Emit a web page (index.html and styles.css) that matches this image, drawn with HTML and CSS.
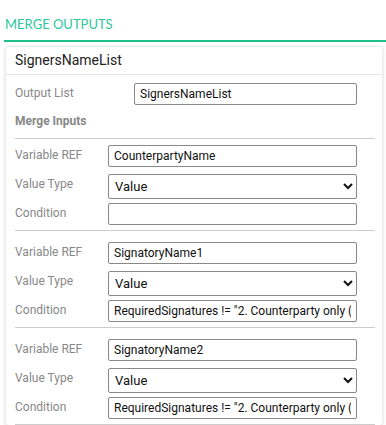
FILE: index.html
```html
<!DOCTYPE html>
<html lang="en">
<head>
    <meta charset="UTF-8">
    <title>Merge Outputs</title>
    <link rel="stylesheet" href="styles.css">
</head>
<body>
    <div class="panel">
        <h2 class="panel-title">MERGE OUTPUTS</h2>

        <div class="card">
            <div class="card-header">SignersNameList</div>
            <div class="card-body">
                <div class="row row-output">
                    <label>Output List</label>
                    <input type="text" value="SignersNameList">
                </div>
                <div class="sub-title">Merge Inputs</div>

                <!-- Input 1 -->
                <div class="group first">
                    <div class="row">
                        <label>Variable REF</label>
                        <input type="text" value="CounterpartyName">
                    </div>
                    <div class="row">
                        <label>Value Type</label>
                        <select><option>Value</option></select>
                    </div>
                    <div class="row">
                        <label>Condition</label>
                        <input type="text" value="">
                    </div>
                </div>

                <!-- Input 2 -->
                <div class="group">
                    <div class="row">
                        <label>Variable REF</label>
                        <input type="text" value="SignatoryName1">
                    </div>
                    <div class="row">
                        <label>Value Type</label>
                        <select><option>Value</option></select>
                    </div>
                    <div class="row">
                        <label>Condition</label>
                        <input type="text" value='RequiredSignatures != "2. Counterparty only (All)"'>
                    </div>
                </div>

                <!-- Input 3 -->
                <div class="group">
                    <div class="row">
                        <label>Variable REF</label>
                        <input type="text" value="SignatoryName2">
                    </div>
                    <div class="row">
                        <label>Value Type</label>
                        <select><option>Value</option></select>
                    </div>
                    <div class="row">
                        <label>Condition</label>
                        <input type="text" value='RequiredSignatures != "2. Counterparty only (All)"'>
                    </div>
                </div>
            </div>
        </div>
    </div>
</body>
</html>
```

FILE: styles.css
```css
/* General Styles */
body {
    font-family: Roboto, "Liberation Sans", Arial, sans-serif;
    background-color: #ffffff;
    margin: 0;
    padding: 0;
    overflow: hidden;
}

.panel {
    padding: 16px 0 0 4px;
}

.panel-title {
    font-family: Lato, "Liberation Sans", sans-serif;
    font-weight: normal;
    font-size: 13px;
    color: #2cc79c;
    margin: 0;
    padding: 0 0 8px 1px;
    line-height: 16px;
    border-bottom: 2px solid #1fbf8c;
}

/* Card */
.card {
    margin: 4px 3px 0 1px;
    border: 1px solid #ececec;
    border-radius: 4px;
    box-shadow: 0 1px 4px rgba(0, 0, 0, 0.12);
    background-color: #ffffff;
}

.card-header {
    font-size: 14px;
    color: #222222;
    padding: 6px 9px;
    line-height: 15px;
    border-bottom: 1px solid #e6e6e6;
}

.card-body {
    padding: 8px 7px 0 9px;
}

/* Rows */
.row {
    display: grid;
    grid-template-columns: 93px 249px;
    align-items: start;
    margin-bottom: 7px;
}

.row-output {
    grid-template-columns: 119px 223px;
    margin-bottom: 9px;
}

.row label {
    font-size: 12px;
    color: #888888;
    padding-top: 3px;
}

.row input,
.row select {
    font-family: Roboto, "Liberation Sans", Arial, sans-serif;
    font-size: 12px;
    color: #111111;
    border: 1px solid #888888;
    border-radius: 2px;
    box-sizing: border-box;
    margin: 0;
    width: 100%;
    background-color: #ffffff;
}

.row input {
    height: 22px;
    padding: 0 5px;
}

.row select {
    height: 25px;
    padding: 0 2px;
    font-size: 13px;
}

.sub-title {
    font-size: 12px;
    font-weight: bold;
    color: #888888;
    padding-bottom: 10px;
    border-bottom: 1px solid #cccccc;
}

/* Merge input groups */
.group {
    padding-top: 11px;
    border-bottom: 1px solid #cccccc;
}

.group.first {
    padding-top: 6px;
}

.group .row:nth-child(2) {
    margin-bottom: 4px;
}

.group .row:last-child {
    margin-bottom: 5px;
}
```
